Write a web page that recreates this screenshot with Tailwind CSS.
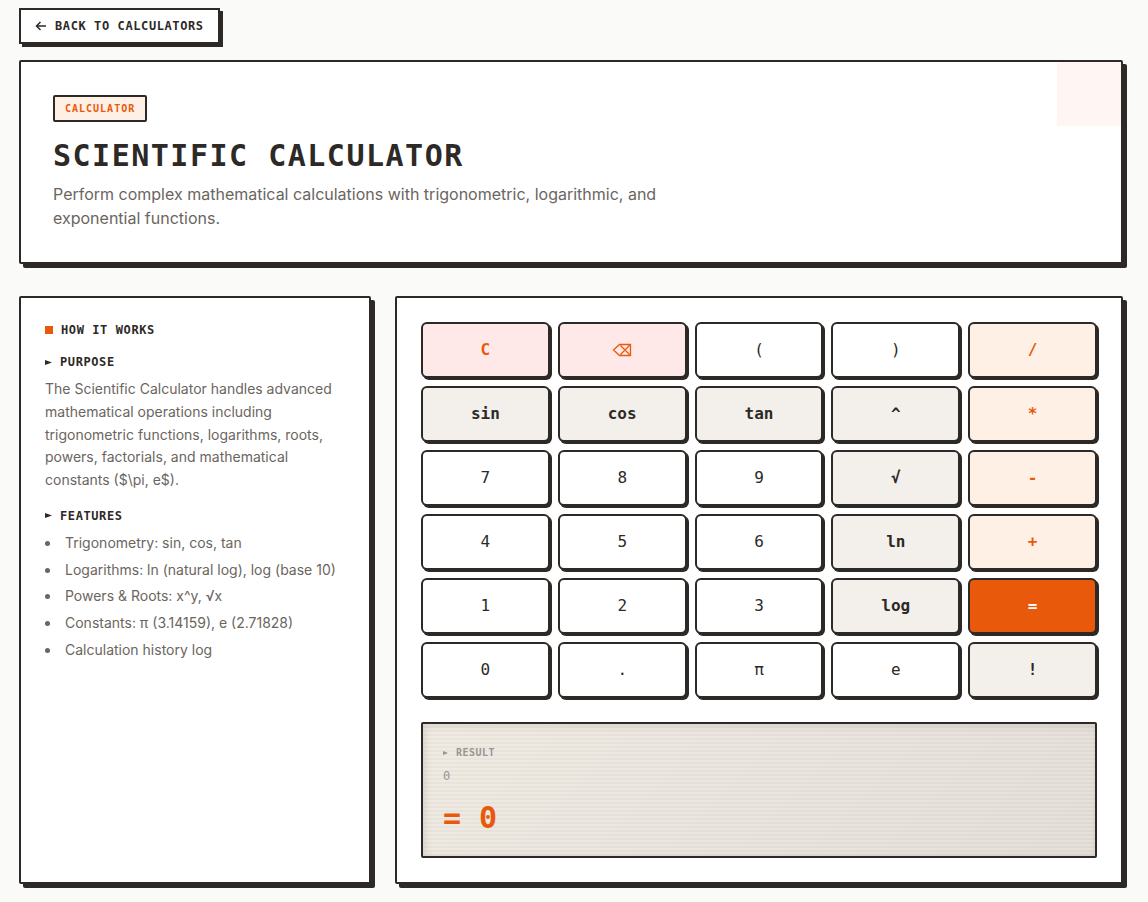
<!DOCTYPE html>
<html lang="en">
<head>
  <meta charset="UTF-8">
  <meta name="viewport" content="width=device-width, initial-scale=1.0">
  <title>Scientific Calculator</title>
  <script src="https://cdn.jsdelivr.net/npm/@tailwindcss/browser@4"></script>
</head>
<body class="bg-[#fafaf8] text-[#2d2926] font-['Inter','Liberation_Sans',sans-serif] pt-2 pb-[18px] pl-[19px] pr-[25px]">

  <a href="#" class="inline-flex items-center gap-2 bg-white border-2 border-[#2d2926] px-3.5 py-2 shadow-[3px_3px_0_#2d2926] font-['DejaVu_Sans_Mono',monospace] text-xs font-bold tracking-wider align-top">
    <svg class="w-3 h-3" viewBox="0 0 12 12" fill="none" stroke="currentColor" stroke-width="1.5" aria-hidden="true">
      <path d="M11 6H1.500M5.500 2L1.500 6l4 4"/>
    </svg>
    BACK TO CALCULATORS
  </a>

  <!-- Header -->
  <header class="relative mt-4 mb-8 bg-white border-2 border-[#2d2926] rounded-xs shadow-[4px_4px_0_#2d2926] px-8 pt-[33px] pb-8">
    <div class="absolute top-0 right-0 w-16 h-16 bg-[#fff6f4]"></div>
    <div class="flex">
      <span class="bg-[#fff0e6] border-2 border-[#2d2926] rounded-xs px-2.5 py-1 font-['DejaVu_Sans_Mono',monospace] text-[10px] leading-[15px] font-bold tracking-widest text-[#e8590c]">CALCULATOR</span>
    </div>
    <h1 class="mt-4 mb-2 font-['DejaVu_Sans_Mono',monospace] text-3xl leading-9 font-bold tracking-wider">SCIENTIFIC CALCULATOR</h1>
    <p class="max-w-2xl text-base text-[#6b6560]">Perform complex mathematical calculations with trigonometric, logarithmic, and exponential functions.</p>
  </header>

  <main class="grid grid-cols-3 gap-6">

    <!-- How it works -->
    <aside class="bg-white border-2 border-[#2d2926] rounded-xs shadow-[4px_4px_0_#2d2926] p-6">
      <h2 class="flex items-center gap-2 mb-4 font-['DejaVu_Sans_Mono',monospace] text-xs font-bold tracking-wider">
        <span class="w-2 h-2 bg-[#e8590c]"></span>HOW IT WORKS
      </h2>
      <h3 class="flex items-center gap-2 mb-2 font-['DejaVu_Sans_Mono',monospace] text-xs font-bold tracking-wider">
        <svg class="w-[7px] h-[5px]" viewBox="0 0 7 5" fill="currentColor" aria-hidden="true"><path d="M0 0l7 2.5L0 5z"/></svg>PURPOSE
      </h3>
      <p class="mb-4 text-sm leading-relaxed text-[#6b6560]">The Scientific Calculator handles advanced mathematical operations including trigonometric functions, logarithms, roots, powers, factorials, and mathematical constants ($\pi, e$).</p>
      <h3 class="flex items-center gap-2 mb-2 font-['DejaVu_Sans_Mono',monospace] text-xs font-bold tracking-wider">
        <svg class="w-[7px] h-[5px]" viewBox="0 0 7 5" fill="currentColor" aria-hidden="true"><path d="M0 0l7 2.5L0 5z"/></svg>FEATURES
      </h3>
      <ul class="list-disc list-inside space-y-1 text-sm leading-relaxed text-[#6b6560]">
        <li>Trigonometry: sin, cos, tan</li>
        <li>Logarithms: ln (natural log), log (base 10)</li>
        <li>Powers &amp; Roots: x^y, √x</li>
        <li>Constants: π (3.14159), e (2.71828)</li>
        <li>Calculation history log</li>
      </ul>
    </aside>

    <!-- Calculator -->
    <section class="col-span-2 bg-white border-2 border-[#2d2926] rounded-xs shadow-[4px_4px_0_#2d2926] p-6">
      <div class="grid grid-cols-5 gap-2 font-['DejaVu_Sans_Mono',monospace] text-base">
        <button type="button" class="h-14 border-2 border-[#2d2926] rounded-md shadow-[2px_2px_0_#2d2926] bg-[#ffe8e8] text-[#e8590c] font-bold">C</button>
        <button type="button" aria-label="Backspace" class="h-14 flex items-center justify-center border-2 border-[#2d2926] rounded-md shadow-[2px_2px_0_#2d2926] bg-[#ffe8e8] text-[#e8590c]">
          <svg class="w-5 h-3.5" viewBox="0 0 20 14" fill="none" stroke="currentColor" stroke-width="1.3" aria-hidden="true"><path d="M7.500 1.500H18.500v11H7.500L1.500 7zM8.500 2.500l9 9M17.500 2.500l-9 9"/></svg>
        </button>
        <button type="button" class="h-14 border-2 border-[#2d2926] rounded-md shadow-[2px_2px_0_#2d2926] bg-white">(</button>
        <button type="button" class="h-14 border-2 border-[#2d2926] rounded-md shadow-[2px_2px_0_#2d2926] bg-white">)</button>
        <button type="button" class="h-14 border-2 border-[#2d2926] rounded-md shadow-[2px_2px_0_#2d2926] bg-[#fff0e6] text-[#e8590c] font-bold">/</button>

        <button type="button" class="h-14 border-2 border-[#2d2926] rounded-md shadow-[2px_2px_0_#2d2926] bg-[#f3f0eb] font-bold">sin</button>
        <button type="button" class="h-14 border-2 border-[#2d2926] rounded-md shadow-[2px_2px_0_#2d2926] bg-[#f3f0eb] font-bold">cos</button>
        <button type="button" class="h-14 border-2 border-[#2d2926] rounded-md shadow-[2px_2px_0_#2d2926] bg-[#f3f0eb] font-bold">tan</button>
        <button type="button" class="h-14 border-2 border-[#2d2926] rounded-md shadow-[2px_2px_0_#2d2926] bg-[#f3f0eb] font-bold">^</button>
        <button type="button" class="h-14 border-2 border-[#2d2926] rounded-md shadow-[2px_2px_0_#2d2926] bg-[#fff0e6] text-[#e8590c] font-bold">*</button>

        <button type="button" class="h-14 border-2 border-[#2d2926] rounded-md shadow-[2px_2px_0_#2d2926] bg-white">7</button>
        <button type="button" class="h-14 border-2 border-[#2d2926] rounded-md shadow-[2px_2px_0_#2d2926] bg-white">8</button>
        <button type="button" class="h-14 border-2 border-[#2d2926] rounded-md shadow-[2px_2px_0_#2d2926] bg-white">9</button>
        <button type="button" class="h-14 border-2 border-[#2d2926] rounded-md shadow-[2px_2px_0_#2d2926] bg-[#f3f0eb] font-bold">√</button>
        <button type="button" class="h-14 border-2 border-[#2d2926] rounded-md shadow-[2px_2px_0_#2d2926] bg-[#fff0e6] text-[#e8590c] font-bold">-</button>

        <button type="button" class="h-14 border-2 border-[#2d2926] rounded-md shadow-[2px_2px_0_#2d2926] bg-white">4</button>
        <button type="button" class="h-14 border-2 border-[#2d2926] rounded-md shadow-[2px_2px_0_#2d2926] bg-white">5</button>
        <button type="button" class="h-14 border-2 border-[#2d2926] rounded-md shadow-[2px_2px_0_#2d2926] bg-white">6</button>
        <button type="button" class="h-14 border-2 border-[#2d2926] rounded-md shadow-[2px_2px_0_#2d2926] bg-[#f3f0eb] font-bold">ln</button>
        <button type="button" class="h-14 border-2 border-[#2d2926] rounded-md shadow-[2px_2px_0_#2d2926] bg-[#fff0e6] text-[#e8590c] font-bold">+</button>

        <button type="button" class="h-14 border-2 border-[#2d2926] rounded-md shadow-[2px_2px_0_#2d2926] bg-white">1</button>
        <button type="button" class="h-14 border-2 border-[#2d2926] rounded-md shadow-[2px_2px_0_#2d2926] bg-white">2</button>
        <button type="button" class="h-14 border-2 border-[#2d2926] rounded-md shadow-[2px_2px_0_#2d2926] bg-white">3</button>
        <button type="button" class="h-14 border-2 border-[#2d2926] rounded-md shadow-[2px_2px_0_#2d2926] bg-[#f3f0eb] font-bold">log</button>
        <button type="button" class="h-14 border-2 border-[#2d2926] rounded-md shadow-[2px_2px_0_#2d2926] bg-[#e8590c] text-white font-bold">=</button>

        <button type="button" class="h-14 border-2 border-[#2d2926] rounded-md shadow-[2px_2px_0_#2d2926] bg-white">0</button>
        <button type="button" class="h-14 border-2 border-[#2d2926] rounded-md shadow-[2px_2px_0_#2d2926] bg-white">.</button>
        <button type="button" class="h-14 border-2 border-[#2d2926] rounded-md shadow-[2px_2px_0_#2d2926] bg-white">π</button>
        <button type="button" class="h-14 border-2 border-[#2d2926] rounded-md shadow-[2px_2px_0_#2d2926] bg-white">e</button>
        <button type="button" class="h-14 border-2 border-[#2d2926] rounded-md shadow-[2px_2px_0_#2d2926] bg-[#f3f0eb] font-bold">!</button>
      </div>

      <!-- Result screen with scanlines -->
      <div class="mt-6 border-2 border-[#2d2926] rounded-xs px-5 pt-[21px] pb-5 bg-[repeating-linear-gradient(0deg,rgba(0,0,0,0.03)_0px,rgba(0,0,0,0.03)_2px,transparent_2px,transparent_4px),linear-gradient(135deg,#f0ebe3,#e5e0da)] shadow-[inset_2px_2px_8px_rgba(0,0,0,0.1)] font-['DejaVu_Sans_Mono',monospace]">
        <div class="flex items-center gap-2 text-[10px] leading-[15px] font-bold tracking-wider text-[#999590]">
          <svg class="w-[5px] h-1" viewBox="0 0 5 4" fill="currentColor" aria-hidden="true"><path d="M0 0l5 2-5 2z"/></svg>RESULT
        </div>
        <div class="mt-2 text-xs text-[#999590]">0</div>
        <div class="mt-4 text-3xl leading-9 font-bold text-[#e8590c]">= 0</div>
      </div>
    </section>

  </main>
</body>
</html>
